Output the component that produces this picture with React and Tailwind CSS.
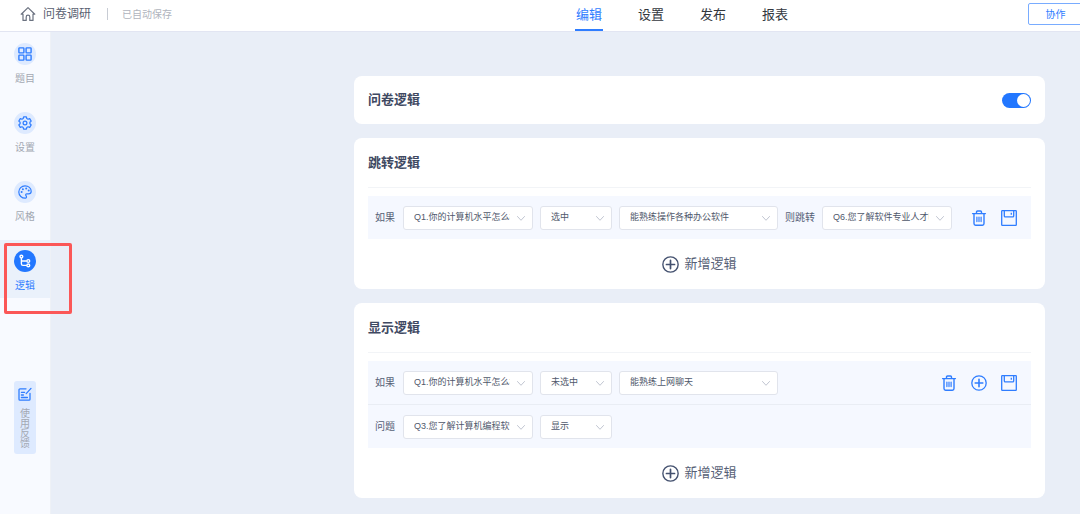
import { useState } from "react";

const tabs = ["编辑", "设置", "发布", "报表"];

function HomeIcon() {
  return (
    <svg viewBox="0 0 16 16" className="size-4" fill="none" stroke="#6b7280" strokeWidth="1.2" strokeLinejoin="round" strokeLinecap="round">
      <path d="M1.2 8.2 8 1.6l6.800 6.600H13v6.200H9.800v-3.400a1.800 1.800 0 0 0-3.600 0v3.400H3V8.200Z" />
    </svg>
  );
}

function GridIcon() {
  return (
    <svg viewBox="0 0 14 14" className="size-3.5" fill="none" stroke="currentColor" strokeWidth="1.4">
      <rect x="0.9" y="0.9" width="5" height="5" rx="0.6" />
      <rect x="8.1" y="0.9" width="5" height="5" rx="0.6" />
      <rect x="0.9" y="8.1" width="5" height="5" rx="0.6" />
      <rect x="8.1" y="8.1" width="5" height="5" rx="0.6" />
    </svg>
  );
}

function GearIcon() {
  return (
    <svg viewBox="0 0 14 14" className="size-3.5" fill="none" stroke="currentColor" strokeWidth="1.2" strokeLinejoin="round">
      <path d="M5.6 0.8h2.8l.4 1.7 1.2.7 1.7-.6 1.5 2.5-1.3 1.2v1.4l1.3 1.2-1.5 2.5-1.7-.6-1.2.7-.4 1.7H5.6l-.4-1.7-1.2-.7-1.7.6L.8 8.9l1.3-1.2V6.3L.8 5.1l1.5-2.5 1.7.6 1.2-.7Z" />
      <circle cx="7" cy="7" r="1.9" />
    </svg>
  );
}

function PaletteIcon() {
  return (
    <svg viewBox="0 0 14 14" className="size-3.5" fill="none" stroke="currentColor" strokeWidth="1.2" strokeLinejoin="round">
      <path d="M7.6 13.2C3.8 13.4 0.8 10.6 0.8 7A6.2 6.2 0 0 1 7 0.8c3.5 0 6.2 2.4 6.2 5.4 0 2-1.2 2.600-2.700 2.600H8.900c-1.300 0-1.500 1-.9 1.800.8 1.100.6 2.500-.4 2.600Z" />
      <g fill="currentColor" stroke="none">
        <circle cx="3.6" cy="7" r="1" />
        <circle cx="4.9" cy="4.2" r="1" />
        <circle cx="8.2" cy="3.5" r="1" />
        <circle cx="10.7" cy="5.6" r="1" />
      </g>
    </svg>
  );
}

function BranchIcon() {
  return (
    <svg viewBox="0 0 14 14" className="size-3.5" fill="none" stroke="currentColor" strokeWidth="1.4">
      <circle cx="3.4" cy="2.6" r="1.400" />
      <path d="M3.4 4v5.800a1.600 1.600 0 0 0 1.600 1.600h3.800M3.400 7h5.400" />
      <circle cx="10.3" cy="7" r="1.400" />
      <circle cx="10.3" cy="11.4" r="1.400" />
    </svg>
  );
}

function NoteIcon() {
  return (
    <svg viewBox="0 0 14 14" className="size-3.5" fill="none" stroke="#2f7dff" strokeWidth="1.3" strokeLinecap="round" strokeLinejoin="round">
      <path d="M8 1.800H2a1 1 0 0 0-1 1v9.400a1 1 0 0 0 1 1h9a1 1 0 0 0 1-1V6.300M3.400 5.300h3.200M3.400 8h2M3.400 10.500h6M8.200 6.600l4.800-5.200" />
    </svg>
  );
}

function TrashIcon() {
  return (
    <svg viewBox="0 0 16 16" className="size-4" fill="none" stroke="currentColor" strokeWidth="1.4" strokeLinecap="round" strokeLinejoin="round">
      <path d="M1.600 3.600h12.800M5.500 3.400V2a1 1 0 0 1 1-1h3a1 1 0 0 1 1 1v1.400M3 3.800v9.800a1.600 1.600 0 0 0 1.600 1.600h6.800a1.600 1.600 0 0 0 1.600-1.600V3.800" />
      <path d="M5.900 7v4.600M8 7v4.600M10.100 7v4.600" strokeWidth="1.200" />
    </svg>
  );
}

function SaveIcon() {
  return (
    <svg viewBox="0 0 16 16" className="size-4" fill="none" stroke="currentColor" strokeWidth="1.3" strokeLinejoin="round">
      <rect x="0.7" y="0.7" width="14.600" height="14.600" rx="0.6" />
      <path d="M3.300 0.900v5a1 1 0 0 0 1 1h7.400a1 1 0 0 0 1-1V0.900M10.300 2.800v2" />
    </svg>
  );
}

function PlusIcon({ className }) {
  return (
    <svg viewBox="0 0 16 16" className={className} fill="none" stroke="currentColor" strokeWidth="1.3" strokeLinecap="round">
      <circle cx="8" cy="8" r="7.200" />
      <path d="M8 4.200v7.600M4.200 8h7.600" strokeWidth="1.600" />
    </svg>
  );
}

const menu = [
  { label: "题目", Icon: GridIcon },
  { label: "设置", Icon: GearIcon },
  { label: "风格", Icon: PaletteIcon },
  { label: "逻辑", Icon: BranchIcon, active: true },
];

function Select({ id, label, value, className }) {
  return (
    <span className={`relative block h-6 shrink-0 ${className}`}>
      <select
        id={id}
        aria-label={label}
        defaultValue={value}
        className="block size-full appearance-none rounded-[3px] border border-[#e1e4ec] bg-white pr-[22px] pl-2.5 text-[9px] text-[#4f586b] outline-none"
      >
        <option>{value}</option>
      </select>
      <svg viewBox="0 0 8 5" className="pointer-events-none absolute top-[10px] right-2 h-[5px] w-2" fill="none" stroke="#c0c5d1" strokeWidth="1" strokeLinecap="round">
        <path d="M0.5 0.5 4 4.300 7.500 0.500" />
      </svg>
    </span>
  );
}

function Card({ title, children }) {
  return (
    <section className="rounded-lg bg-white px-3.5">
      <h2 className="flex h-[50px] items-center border-b border-[#f2f4f7] pt-px text-[13px] font-bold text-[#3f4962]">
        {title}
      </h2>
      <div className="mt-2 bg-[#f5f8ff]">{children}</div>
      <div className="flex h-[50px] items-center justify-center">
        <button type="button" className="flex items-center gap-[5px] text-[13px] text-[#566076]">
          <PlusIcon className="size-[17px] text-[#44516f]" />
          新增逻辑
        </button>
      </div>
    </section>
  );
}

function Row({ id, label, children, actions }) {
  return (
    <div className="flex h-[43px] items-center pr-3.5 pl-[7px] text-[10px] text-[#566076]">
      <div className="flex items-center gap-[7px]">
        <label htmlFor={id} className="w-[21px] whitespace-nowrap">
          {label}
        </label>
        {children}
      </div>
      <div className="ml-auto flex gap-3.5 text-[#2f7dff]">{actions}</div>
    </div>
  );
}

function IconButton({ label, children }) {
  return (
    <button type="button" aria-label={label} className="size-4">
      {children}
    </button>
  );
}

export default function App() {
  const [enabled, setEnabled] = useState(true);
  const [tab, setTab] = useState("编辑");

  return (
    <div className="flex min-h-screen flex-col bg-[#e9eef7] font-['Liberation_Sans','Noto_Sans_CJK_SC',sans-serif]">
      <header className="flex h-8 items-center overflow-hidden border-b border-[#e2e5f2] bg-white">
        <div className="flex flex-1 items-center pb-[3px] pl-5">
          <a href="#home" aria-label="首页">
            <HomeIcon />
          </a>
          <span className="ml-[7px] text-[12px] text-[#5a6172]">问卷调研</span>
          <span className="ml-4 h-3 w-px bg-[#c8ccd4]" />
          <span className="ml-3.5 text-[10px] text-[#b0b4bd]">已自动保存</span>
        </div>
        <nav className="flex h-full gap-[34px]">
          {tabs.map((name) => (
            <button
              key={name}
              type="button"
              onClick={() => setTab(name)}
              className={`w-7 border-b-2 text-[13px] whitespace-nowrap ${
                tab === name ? "border-[#2f7dff] text-[#2f7dff]" : "border-transparent text-[#33373e]"
              }`}
            >
              {name}
            </button>
          ))}
        </nav>
        <div className="flex w-[291px] pb-[3px] pl-[239px]">
          <button type="button" className="h-[22px] w-[55px] shrink-0 rounded-[2px] border border-[#79acff] text-[10px] text-[#2f7dff]">
            协作
          </button>
        </div>
      </header>

      <div className="flex flex-1">
        <aside className="relative flex w-[51px] shrink-0 flex-col border-r border-[#eef1f6] bg-[#f8faff] pt-px">
          <nav className="flex flex-col gap-[11px]">
            {menu.map(({ label, Icon, active }) => (
              <a
                key={label}
                href={`#${label}`}
                className={`flex h-[58px] flex-col items-center gap-2 pt-2.5 text-[10px] leading-[12px] ${
                  active ? "bg-[#eaf1fb] text-[#2f7dff]" : "text-[#a3a8b2]"
                }`}
              >
                <span
                  className={`flex size-[22px] items-center justify-center rounded-full ${
                    active ? "bg-[#2277ff] text-white" : "bg-[#deeaff] text-[#2f7dff]"
                  }`}
                >
                  <Icon />
                </span>
                {label}
              </a>
            ))}
          </nav>
          <button
            type="button"
            className="mx-auto mt-[83px] flex w-[22px] flex-col items-center gap-2 rounded-[3px] bg-[#deeaff] pt-1.5 pb-[5px] text-[10px] leading-[10px] text-[#a3a8b2]"
          >
            <NoteIcon />
            <span className="w-2.5 break-all">使用反馈</span>
          </button>
          {/* highlight around the logic entry */}
          <div className="pointer-events-none absolute top-[211px] left-1 h-[71px] w-[68px] rounded-[2px] border-[3px] border-[#fb5757]" />
        </aside>

        <main className="flex-1 pt-11 pr-[35px] pb-4 pl-[303px]">
          <div className="flex flex-col gap-3.5">
            <section className="flex h-12 items-center justify-between rounded-lg bg-white px-3.5">
              <h2 className="text-[13px] font-bold text-[#3f4962]">
                <label htmlFor="logic">问卷逻辑</label>
              </h2>
              <input
                id="logic"
                type="checkbox"
                role="switch"
                checked={enabled}
                onChange={(e) => setEnabled(e.target.checked)}
                className="flex h-[15px] w-[29px] appearance-none items-center rounded-full bg-gray-300 px-px before:size-[13px] before:rounded-full before:bg-white checked:justify-end checked:bg-[#2277ff]"
              />
            </section>

            <Card title="跳转逻辑">
              <Row
                id="jump-q"
                label="如果"
                actions={
                  <>
                    <IconButton label="删除">
                      <TrashIcon />
                    </IconButton>
                    <IconButton label="保存">
                      <SaveIcon />
                    </IconButton>
                  </>
                }
              >
                <Select id="jump-q" value="Q1.你的计算机水平怎么样" className="w-[130px]" />
                <Select label="条件" value="选中" className="w-[72px]" />
                <Select label="选项" value="能熟练操作各种办公软件" className="w-[159px]" />
                <label htmlFor="jump-to" className="whitespace-nowrap">
                  则跳转
                </label>
                <Select id="jump-to" value="Q6.您了解软件专业人才吗" className="w-[130px]" />
              </Row>
            </Card>

            <Card title="显示逻辑">
              <Row
                id="show-q"
                label="如果"
                actions={
                  <>
                    <IconButton label="删除">
                      <TrashIcon />
                    </IconButton>
                    <IconButton label="添加">
                      <PlusIcon className="size-4" />
                    </IconButton>
                    <IconButton label="保存">
                      <SaveIcon />
                    </IconButton>
                  </>
                }
              >
                <Select id="show-q" value="Q1.你的计算机水平怎么样" className="w-[130px]" />
                <Select label="条件" value="未选中" className="w-[72px]" />
                <Select label="选项" value="能熟练上网聊天" className="w-[159px]" />
              </Row>
              <div className="border-t border-[#e9edf4]">
                <Row id="show-target" label="问题">
                  <Select id="show-target" value="Q3.您了解计算机编程软件吗" className="w-[130px]" />
                  <Select label="动作" value="显示" className="w-[72px]" />
                </Row>
              </div>
            </Card>
          </div>
        </main>
      </div>
    </div>
  );
}
